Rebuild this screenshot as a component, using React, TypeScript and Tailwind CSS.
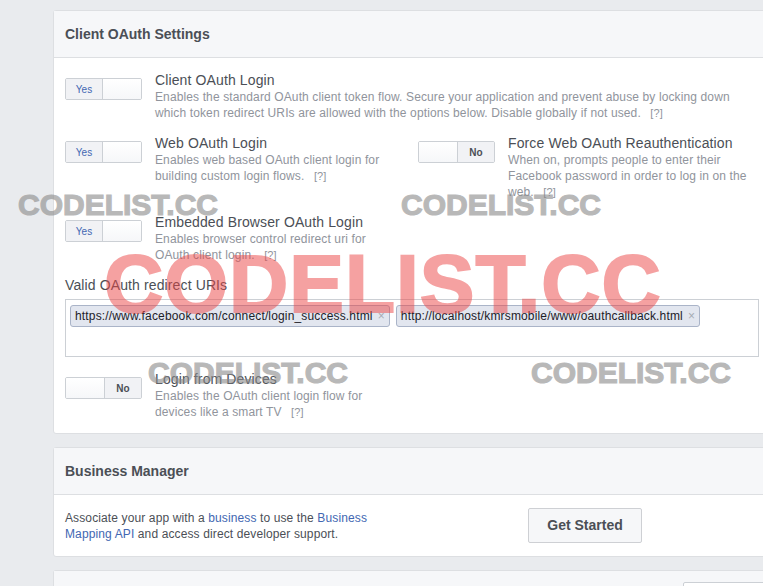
import type { ReactNode } from 'react'

// ---------------------------------------------------------------------------
// Small pieces
// ---------------------------------------------------------------------------

function Toggle({ on }: { on: boolean }) {
  return (
    <div className="flex h-[22px] w-[77px] shrink-0 overflow-hidden rounded-[2px] border border-[#ccd0d5] bg-white">
      {on ? (
        <>
          <div className="flex w-[37px] items-center justify-center border-r border-[#ccd0d5] bg-[#f1f2f5] text-[10px] text-[#4267b2]">
            Yes
          </div>
          <div className="flex-1 bg-gradient-to-b from-white to-[#f6f7f9]" />
        </>
      ) : (
        <>
          <div className="w-[38px] bg-gradient-to-b from-white to-[#f6f7f9]" />
          <div className="flex flex-1 items-center justify-center border-l border-[#ccd0d5] bg-[#f1f2f5] text-[10px] font-bold text-[#4b4f56]">
            No
          </div>
        </>
      )}
    </div>
  )
}

function Help() {
  return <span className="ml-[6px] text-[11px] text-[#90949c]">[?]</span>
}

interface RowProps {
  on: boolean
  title: string
  children: ReactNode
  descWidth: string
}

function SettingRow({ on, title, children, descWidth }: RowProps) {
  return (
    <div className="flex gap-[13px]">
      <div className="pt-[7px]">
        <Toggle on={on} />
      </div>
      <div className={descWidth}>
        <div className="text-[14px] leading-[18px] tracking-[0.12px] text-[#4b4f56]">{title}</div>
        <div className="text-[12px] leading-[16px] tracking-[0.12px] text-[#90949c]">{children}</div>
      </div>
    </div>
  )
}

function Token({ label }: { label: string }) {
  return (
    <div className="flex h-[22px] items-center rounded-[3px] border border-[#aab4c8] bg-[#e2e6ef] px-[4px] text-[12px] tracking-[0.16px] text-[#1d2129]">
      {label}
      <span className="ml-[5px] text-[12px] text-[#a7abb4]">×</span>
    </div>
  )
}

function CardHeader({ title, children }: { title?: string; children?: ReactNode }) {
  return (
    <div className="flex h-[47px] items-center border-b border-[#dddfe2] bg-[#f6f7f9] px-[11px]">
      {title && <div className="text-[14px] font-bold text-[#4b4f56]">{title}</div>}
      {children}
    </div>
  )
}

const grayMark =
  'pointer-events-none absolute text-[30px] font-bold leading-none text-[#8a8a8a] opacity-60 [-webkit-text-stroke:1.2px_#8a8a8a]'

// ---------------------------------------------------------------------------
// Page
// ---------------------------------------------------------------------------

export default function App() {
  return (
    <div
      className="relative h-[586px] w-[763px] overflow-hidden bg-[#e9ebee] pl-[53px] pt-[10px]"
      style={{ fontFamily: '"Liberation Sans", Arial, sans-serif' }}
    >
      <div className="flex flex-col gap-[13px]">
        {/* Client OAuth Settings */}
        <div className="w-[718px] rounded-[3px] border border-[#dddfe2] bg-white">
          <CardHeader title="Client OAuth Settings" />
          <div className="flex flex-col gap-[13px] px-[11px] pb-[13px] pt-[13px]">
            <SettingRow on title="Client OAuth Login" descWidth="w-[592px]">
              Enables the standard OAuth client token flow. Secure your application and prevent abuse
              by locking down which token redirect URIs are allowed with the options below. Disable
              globally if not used. <Help />
            </SettingRow>

            <div className="grid grid-cols-[353px_1fr]">
              <SettingRow on title="Web OAuth Login" descWidth="w-[250px]">
                Enables web based OAuth client login for building custom login flows. <Help />
              </SettingRow>
              <SettingRow on={false} title="Force Web OAuth Reauthentication" descWidth="w-[252px]">
                When on, prompts people to enter their Facebook password in order to log in on the
                web. <Help />
              </SettingRow>
            </div>

            <SettingRow on title="Embedded Browser OAuth Login" descWidth="w-[236px]">
              Enables browser control redirect uri for OAuth client login. <Help />
            </SettingRow>

            <div>
              <div className="mb-[5px] text-[14px] leading-[18px] tracking-[0.12px] text-[#4b4f56]">
                Valid OAuth redirect URIs
              </div>
              <div className="flex h-[58px] items-start gap-[6px] border border-[#ccd0d5] px-[4px] pt-[5px]">
                <Token label="https://www.facebook.com/connect/login_success.html" />
                <Token label="http://localhost/kmrsmobile/www/oauthcallback.html" />
              </div>
            </div>

            <SettingRow on={false} title="Login from Devices" descWidth="w-[230px]">
              Enables the OAuth client login flow for devices like a smart TV <Help />
            </SettingRow>
          </div>
        </div>

        {/* Business Manager */}
        <div className="w-[718px] rounded-[3px] border border-[#dddfe2] bg-white">
          <CardHeader title="Business Manager" />
          <div className="flex items-center px-[11px] py-[13px]">
            <div className="w-[320px] text-[12px] leading-[16px] tracking-[0.12px] text-[#4b4f56]">
              Associate your app with a <span className="text-[#4267b2]">business</span> to use the{' '}
              <span className="text-[#4267b2]">Business Mapping API</span> and access direct developer
              support.
            </div>
            <button className="ml-[143px] h-[35px] w-[114px] rounded-[2px] border border-[#ced0d4] bg-[#f6f7f9] text-[14px] font-bold text-[#4b4f56]">
              Get Started
            </button>
          </div>
        </div>

        {/* next card, cut off */}
        <div className="w-[718px] rounded-[3px] border border-[#dddfe2] bg-white">
          <CardHeader>
            <div className="ml-auto mr-[-10px] h-[24px] w-[86px] rounded-[2px] border border-[#ccd0d5] bg-white" />
          </CardHeader>
        </div>
      </div>

      {/* watermarks */}
      <div className="pointer-events-none absolute left-[104px] top-[243px] text-[82px] font-bold leading-none tracking-[1px] text-[#ec4646] opacity-50 [-webkit-text-stroke:2px_#ec4646]">
        CODELIST.CC
      </div>
      <div className={`${grayMark} left-[18px] top-[190px]`}>CODELIST.CC</div>
      <div className={`${grayMark} left-[401px] top-[190px]`}>CODELIST.CC</div>
      <div className={`${grayMark} left-[148px] top-[358px]`}>CODELIST.CC</div>
      <div className={`${grayMark} left-[531px] top-[358px]`}>CODELIST.CC</div>
    </div>
  )
}
